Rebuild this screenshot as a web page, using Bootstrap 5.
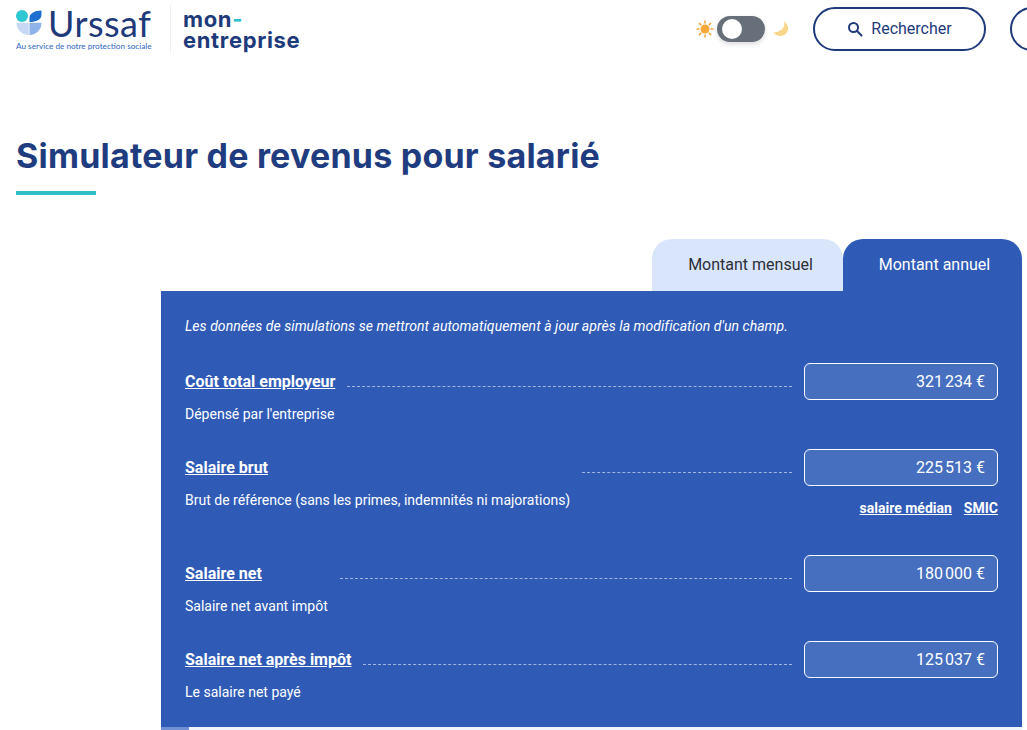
<!doctype html>
<html lang="fr">
<head>
<meta charset="utf-8">
<title>Simulateur de revenus pour salarié</title>
<link href="https://cdn.jsdelivr.net/npm/bootstrap@5.3.0/dist/css/bootstrap.min.css" rel="stylesheet">
<style>
html,body{height:730px;overflow:hidden;background:#fff}
body{font-family:Roboto,"Liberation Sans",sans-serif;color:#1e3a7b}
.site-head{height:58px;padding-left:16px}
.logo-mark{width:26px;height:25px}
.logo-wrap{width:136px;flex:none;padding-top:2px}
.logo-word{font-family:Lato,"Open Sans",sans-serif;font-size:36px;line-height:26px;color:#1e3a7b;letter-spacing:.5px;margin-left:6px;white-space:nowrap}
.logo-tag{font-family:Lato,"Open Sans",sans-serif;font-size:8.2px;line-height:10px;color:#2f66c2;white-space:nowrap;margin-top:5px}
.logo-sep{width:1px;height:48px;background:#edf0f5;margin:0 12px 0 18px;flex:none}
.brand-name{font-family:Inter,"Open Sans",sans-serif;font-weight:700;font-size:22px;line-height:21px;color:#1e3a7b;letter-spacing:.65px;flex:none;width:118px;padding-top:2px}
.brand-name span{color:#2ebfc9}
.mode-switch{width:48px;height:26px;border-radius:13px;background:#666f7a;padding:3px 5px;box-shadow:0 2px 5px rgba(0,0,0,.15);margin-left:3px}
.mode-knob{width:20px;height:20px;border-radius:50%;background:#fff}
.search-btn,.other-btn{height:44px;border:2px solid #1e3a7b;border-radius:22px;background:#fff;color:#1e3a7b;font-size:16px}
.search-btn{width:173px;margin-left:24px}
.other-btn{width:60px;margin-left:24px;flex:none}
.head-tools{margin-left:395px;flex:none}
.page-title{font-family:Inter,"Open Sans",sans-serif;font-weight:700;font-size:34px;line-height:44px;letter-spacing:.22px;color:#1f3c80;margin:76px 0 0 16px;white-space:nowrap}
.title-bar{width:80px;height:4px;background:#2ebfc9;margin:13px 0 44px 16px}
.tabs-row{margin-left:652px;width:370px;height:52px}
.tab-item{height:52px;border-radius:20px 20px 0 0;font-size:16px;line-height:51px;text-align:center}
.tab-off{width:191px;background:#d9e5fb;color:#2b2f38;padding-left:6px}
.tab-on{width:179px;background:#2f5bb7;color:#fff;padding-left:4px}
.sim-panel{margin-left:161px;width:861px;height:436px;background:#2f5bb7;color:#fff;padding:24px 24px 0}
.sim-note{font-size:14px;font-style:italic;line-height:22px;margin-bottom:26px;letter-spacing:.05px;white-space:nowrap}
.sim-row{height:86px}
.sim-row.has-links{height:106px}
.row-label{font-size:16px;font-weight:700;text-decoration:underline;line-height:37px;white-space:nowrap;color:#fff}
.row-dots{border-bottom:1px dashed rgba(255,255,255,.55);height:1px;margin:23px 12px 0 12px}
.row-sub{font-size:14px;line-height:20px;margin-top:4px}
.amount-box{width:194px;height:37px;border:1px solid #fff;border-radius:6px;background:#466fc0;text-align:right;padding:0 12px;font-size:16px;line-height:35px;flex:none}
.quick-links{font-size:14px;font-weight:700;line-height:20px;margin-top:12px;gap:12px}
.quick-links a{color:#fff}
.foot-strip{margin-left:161px;width:861px;height:3px;background:#f0f5fc}
.foot-strip div{width:28px;height:3px;background:#7191d4}
</style>
</head>
<body>
<header class="site-head d-flex align-items-center">
  <div class="logo-wrap">
    <div class="d-flex align-items-center">
      <svg class="logo-mark flex-shrink-0" viewBox="0 0 26 25" aria-hidden="true">
        <circle cx="6" cy="6" r="6" fill="#2ec7d2"/>
        <path d="M13.500 12V7.500C13.500 4 18 0.500 25.500 0.500V5C25.500 9.500 20 12 13.500 12Z" fill="#1e6fd0"/>
        <path d="M0.500 12.800H12.800V25C5.500 25 0.500 19.500 0.500 12.800Z" fill="#c8d8f4"/>
        <path d="M13.500 12.800H25.500C25.500 19.500 20.500 25 13.500 25Z" fill="#8fb2e8"/>
      </svg>
      <div class="logo-word">Urssaf</div>
    </div>
    <div class="logo-tag">Au service de notre protection sociale</div>
  </div>
  <div class="logo-sep"></div>
  <div class="brand-name">mon<span>-</span><br>entreprise</div>
  <div class="head-tools d-flex align-items-center">
    <svg width="18" height="18" viewBox="0 0 18 18" aria-hidden="true"><circle cx="9" cy="9" r="4.500" fill="#f9a83a"/><g stroke="#f9a83a" stroke-width="1.600" stroke-linecap="round"><path d="M9 1v2M9 15v2M1 9h2M15 9h2M3.400 3.400l1.400 1.400M13.200 13.200l1.400 1.400M3.400 14.600l1.400-1.400M13.200 4.800l1.400-1.400"/></g></svg>
    <div class="mode-switch"><div class="mode-knob"></div></div>
    <svg class="ms-2" width="16" height="16" viewBox="0 0 16 16" aria-hidden="true"><path d="M11 0.500c1.500 6-3 10.500-10.500 11 2.500 4 11 5.500 14-1 1.500-3.500 0-8-3.500-10Z" fill="#f8d68a"/></svg>
    <button class="search-btn d-flex align-items-center justify-content-center gap-2" type="button">
      <svg width="16" height="16" viewBox="0 0 16 16" aria-hidden="true"><circle cx="6.500" cy="6.500" r="4.500" fill="none" stroke="#1e3a7b" stroke-width="2"/><path d="M10 10l4.500 4.500" stroke="#1e3a7b" stroke-width="2" stroke-linecap="round"/></svg>
      Rechercher
    </button>
    <div class="other-btn"></div>
  </div>
</header>
<h1 class="page-title">Simulateur de revenus pour salarié</h1>
<div class="title-bar"></div>
<div class="tabs-row d-flex">
  <div class="tab-item tab-off">Montant mensuel</div>
  <div class="tab-item tab-on">Montant annuel</div>
</div>
<main class="sim-panel">
  <p class="sim-note">Les données de simulations se mettront automatiquement à jour après la modification d'un champ.</p>
  <div class="sim-row">
    <div class="d-flex"><div class="row-label">Coût total employeur</div><div class="row-dots flex-grow-1"></div><div class="amount-box">321&#8239;234 €</div></div>
    <div class="row-sub">Dépensé par l'entreprise</div>
  </div>
  <div class="sim-row has-links">
    <div class="d-flex"><div class="row-label">Salaire brut</div><div class="row-dots flex-grow-1" style="margin-left:314px"></div><div class="amount-box">225&#8239;513 €</div></div>
    <div class="d-flex justify-content-between">
      <div class="row-sub">Brut de référence (sans les primes, indemnités ni majorations)</div>
      <div class="quick-links d-flex"><a href="#">salaire médian</a><a href="#">SMIC</a></div>
    </div>
  </div>
  <div class="sim-row">
    <div class="d-flex"><div class="row-label">Salaire net</div><div class="row-dots flex-grow-1" style="margin-left:78px"></div><div class="amount-box">180&#8239;000 €</div></div>
    <div class="row-sub">Salaire net avant impôt</div>
  </div>
  <div class="sim-row">
    <div class="d-flex"><div class="row-label">Salaire net après impôt</div><div class="row-dots flex-grow-1"></div><div class="amount-box">125&#8239;037 €</div></div>
    <div class="row-sub">Le salaire net payé</div>
  </div>
</main>
<div class="foot-strip"><div></div></div>
</body>
</html>
